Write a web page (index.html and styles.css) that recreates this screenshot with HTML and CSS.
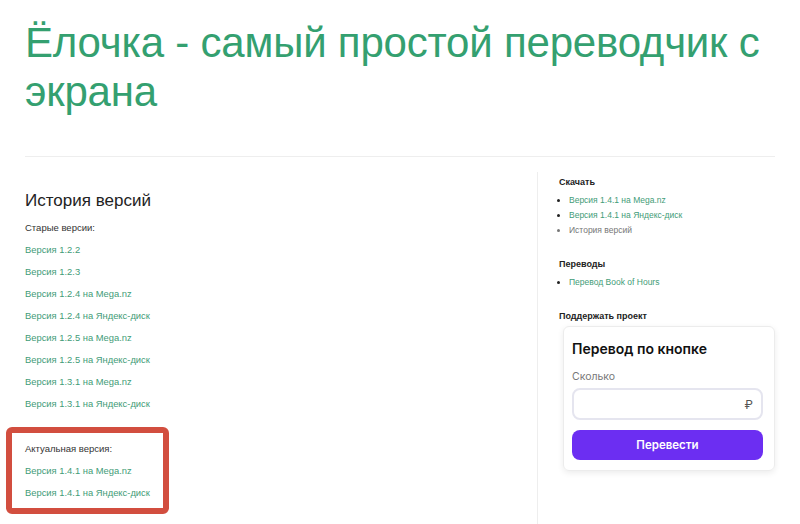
FILE: index.html
```html
<!DOCTYPE html>
<html lang="ru">
<head>
<meta charset="utf-8">
<title>Ёлочка</title>
<link rel="stylesheet" href="styles.css">
</head>
<body>
<div class="page">
  <h1 class="title">Ёлочка - самый простой переводчик с экрана</h1>
  <hr class="divider">
  <div class="main">
    <div class="content">
      <h2 class="heading">История версий</h2>
      <p class="label">Старые версии:</p>
      <p class="row"><a class="link" href="#">Версия 1.2.2</a></p>
      <p class="row"><a class="link" href="#">Версия 1.2.3</a></p>
      <p class="row"><a class="link" href="#">Версия 1.2.4 на Mega.nz</a></p>
      <p class="row"><a class="link" href="#">Версия 1.2.4 на Яндекс-диск</a></p>
      <p class="row"><a class="link" href="#">Версия 1.2.5 на Mega.nz</a></p>
      <p class="row"><a class="link" href="#">Версия 1.2.5 на Яндекс-диск</a></p>
      <p class="row"><a class="link" href="#">Версия 1.3.1 на Mega.nz</a></p>
      <p class="row"><a class="link" href="#">Версия 1.3.1 на Яндекс-диск</a></p>
      <div class="current">
        <p class="label">Актуальная версия:</p>
        <p class="row"><a class="link" href="#">Версия 1.4.1 на Mega.nz</a></p>
        <p class="row"><a class="link" href="#">Версия 1.4.1 на Яндекс-диск</a></p>
      </div>
    </div>
    <aside class="sidebar">
      <h3 class="side-title">Скачать</h3>
      <ul class="side-list side-list-first">
        <li><a class="link" href="#">Версия 1.4.1 на Mega.nz</a></li>
        <li><a class="link" href="#">Версия 1.4.1 на Яндекс-диск</a></li>
        <li class="muted">История версий</li>
      </ul>
      <h3 class="side-title">Переводы</h3>
      <ul class="side-list side-list-second">
        <li><a class="link" href="#">Перевод Book of Hours</a></li>
      </ul>
      <h3 class="side-title">Поддержать проект</h3>
      <div class="card">
        <div class="card-title">Перевод по кнопке</div>
        <div class="card-label">Сколько</div>
        <div class="input"><span class="rub">₽</span></div>
        <div class="button">Перевести</div>
      </div>
    </aside>
  </div>
</div>
</body>
</html>
```
FILE: styles.css
```css
html, body {
  margin: 0;
  padding: 0;
  background: #ffffff;
}
body {
  font-family: "Liberation Sans", Arial, sans-serif;
  color: #222;
  overflow: hidden;
}
.page {
  padding: 0 25px;
}
.title {
  margin: 0;
  padding-top: 18px;
  font-weight: normal;
  font-size: 42px;
  line-height: 49px;
  color: #34a070;
  letter-spacing: -0.2px;
}
.divider {
  margin: 40px 0 0 0;
  border: 0;
  border-top: 1px solid #eeeeee;
  height: 0;
}
.main {
  display: flex;
}
.content {
  width: 512px;
  padding-top: 33px;
  padding-bottom: 12px;
}
.heading {
  margin: 0 0 5px 0;
  font-weight: normal;
  font-size: 17px;
  line-height: 22px;
  color: #222;
}
.label {
  margin: 0;
  font-size: 9.5px;
  line-height: 22px;
  color: #333;
}
.row {
  margin: 0;
  font-size: 9.4px;
  line-height: 22px;
}
.link {
  color: #3f9c77;
  text-decoration: none;
}
.current {
  margin: 12px 0 0 -19px;
  width: 128px;
  padding: 5px 10px 4px 13px;
  border: 6px solid #d24e3f;
  border-radius: 6px;
}
.sidebar {
  flex: 1;
  margin-top: 15px;
  border-left: 1px solid #eeeeee;
  padding: 3px 0 0 21px;
}
.side-title {
  margin: 0;
  font-size: 9px;
  line-height: 14px;
  font-weight: bold;
  color: #222;
}
.side-list {
  margin: 4px 0 19px 0;
  padding: 0 0 0 10px;
  font-size: 8.5px;
  line-height: 15px;
}
.side-list-second {
  margin-bottom: 19px;
}
.side-list li {
  color: #222;
}
.side-list .muted {
  color: #777;
}
.card {
  margin: 3px 0 0 4px;
  border: 1px solid #ececec;
  border-radius: 6px;
  box-shadow: 0 2px 6px rgba(0, 0, 0, 0.08);
  padding: 12px 11px 10px 8px;
  font-family: Inter, "Noto Sans", sans-serif;
}
.card-title {
  font-size: 14px;
  font-weight: 600;
  line-height: 20px;
  color: #111;
}
.card-label {
  margin-top: 10px;
  font-size: 10.5px;
  line-height: 16px;
  color: #777;
}
.input {
  margin-top: 3px;
  height: 28px;
  border: 2px solid #e5e5ef;
  border-radius: 8px;
  display: flex;
  align-items: center;
  justify-content: flex-end;
  padding-right: 8px;
}
.rub {
  font-size: 12px;
  color: #555;
}
.button {
  margin-top: 10px;
  height: 30px;
  border-radius: 8px;
  background: #6c2ef2;
  color: #ffffff;
  font-size: 11.5px;
  font-weight: 600;
  display: flex;
  align-items: center;
  justify-content: center;
}
```
